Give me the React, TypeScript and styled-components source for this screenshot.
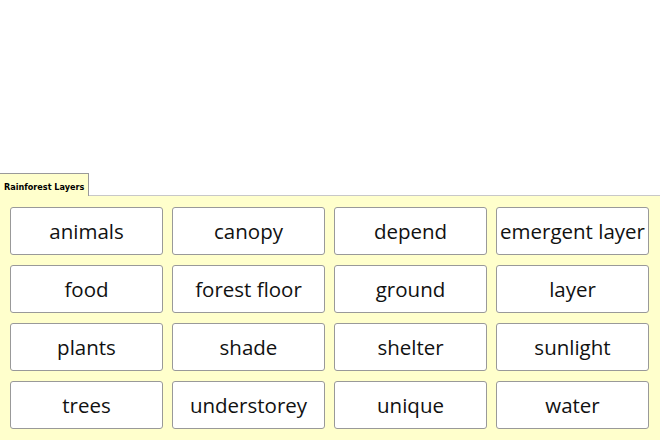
import React from "react";
import styled, { createGlobalStyle } from "styled-components";

const Global = createGlobalStyle`
  html, body { margin: 0; padding: 0; background: #ffffff; }
  body { width: 660px; height: 440px; overflow: hidden; }
`;

const Page = styled.div`
  width: 660px;
  height: 440px;
  display: flex;
  flex-direction: column;
  justify-content: flex-end;
`;

const TabBar = styled.div`
  display: flex;
  height: 22px;
  align-items: flex-start;
`;

const Tab = styled.div`
  height: 23px;
  box-sizing: border-box;
  padding: 3px 4px 0 4px;
  display: flex;
  align-items: center;
  background: #ffffcc;
  border-top: 1px solid #9a9a9a;
  border-right: 1px solid #9a9a9a;
  font-family: "DejaVu Sans Condensed", "DejaVu Sans", sans-serif;
  font-stretch: condensed;
  font-weight: bold;
  font-size: 9px;
  color: #000;
  position: relative;
  z-index: 1;
`;

const Panel = styled.div`
  background: #ffffcc;
  border-top: 1px solid #c8c8c8;
  padding: 11px 11px 11px 10px;
  display: grid;
  grid-template-columns: repeat(4, 153px);
  grid-auto-rows: 48px;
  column-gap: 9px;
  row-gap: 10px;
`;

const Card = styled.div`
  box-sizing: border-box;
  background: #ffffff;
  border: 1px solid #999999;
  border-radius: 3px;
  display: flex;
  align-items: center;
  justify-content: center;
  font-family: "Open Sans", sans-serif;
  font-size: 20.5px;
  color: #111;
  white-space: nowrap;
  overflow: hidden;
`;

const words = [
  "animals", "canopy", "depend", "emergent layer",
  "food", "forest floor", "ground", "layer",
  "plants", "shade", "shelter", "sunlight",
  "trees", "understorey", "unique", "water",
];

export default function App() {
  return (
    <Page>
      <Global />
      <TabBar>
        <Tab>Rainforest Layers</Tab>
      </TabBar>
      <Panel>
        {words.map((w) => (
          <Card key={w}>{w}</Card>
        ))}
      </Panel>
    </Page>
  );
}
